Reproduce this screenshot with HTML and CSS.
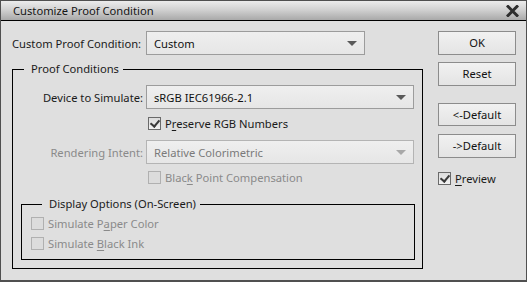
FILE: index.html
```html
<!DOCTYPE html>
<html>
<head>
<title>Customize Proof Condition</title>
<link rel="stylesheet" href="styles.css">
</head>
<body>

<div class="dialog">

	<!-- start:titlebar -->
	<div class="titlebar">
		<span class="title">Customize Proof Condition</span>
		<svg class="close" width="13" height="12" viewBox="0 0 13 12">
			<path d="M2 1.5 L11 10.5 M11 1.5 L2 10.5" stroke="#2e2e2e" stroke-width="3" stroke-linecap="square"/>
		</svg>
	</div>
	<!-- end:titlebar -->

	<div class="content">

		<!-- start:main -->
		<div class="main">

			<div class="top_row">
				<span class="top_label">Custom Proof Condition:</span>
				<div class="select top_select"><span>Custom</span><i class="arrow"></i></div>
			</div>

			<fieldset class="group proof">
				<legend>Proof Conditions</legend>

				<div class="field first">
					<span class="field_label">Device to Simulate:</span>
					<div class="select"><span>sRGB IEC61966-2.1</span><i class="arrow"></i></div>
				</div>

				<div class="check indent gap_a">
					<span class="box checked"></span>
					<span>P<u>r</u>eserve RGB Numbers</span>
				</div>

				<div class="field gap_b disabled">
					<span class="field_label">Rendering Intent:</span>
					<div class="select"><span>Relative Colorimetric</span><i class="arrow"></i></div>
				</div>

				<div class="check indent gap_c disabled">
					<span class="box"></span>
					<span>Blac<u>k</u> Point Compensation</span>
				</div>

				<fieldset class="group display">
					<legend>Display Options (On-Screen)</legend>
					<div class="check disabled gap_d">
						<span class="box"></span>
						<span>Simulate P<u>a</u>per Color</span>
					</div>
					<div class="check disabled gap_e">
						<span class="box"></span>
						<span>Simulate <u>B</u>lack Ink</span>
					</div>
				</fieldset>

			</fieldset>

		</div>
		<!-- end:main -->

		<!-- start:side -->
		<div class="side">
			<div class="button">OK</div>
			<div class="button reset">Reset</div>
			<div class="button back">&lt;-Default</div>
			<div class="button fwd">-&gt;Default</div>
			<div class="check preview">
				<span class="box checked"></span>
				<span><u>P</u>review</span>
			</div>
		</div>
		<!-- end:side -->

	</div>

</div>

</body>
</html>
```

FILE: styles.css
```css
html, body {margin: 0; padding: 0;}
body {background: #dfdfdf; font: 11.2px "Noto Sans", "Open Sans", Arial, sans-serif; color: #1a1a1a; white-space: nowrap;}
u {text-decoration: underline; text-underline-offset: 2px;}
/* ---------- ---------- WINDOW ---------- ---------- */
.dialog {width: 527px; height: 282px; box-sizing: border-box; border: 1px solid #505050; border-bottom-width: 2px; background: #dfdfdf; overflow: hidden;}
.titlebar {height: 19px; border-bottom: 1px solid #000; background: linear-gradient(#ececec, #d2d2d2 45%, #a9a9a9); display: flex; align-items: center; justify-content: space-between; padding: 0 7px 0 12px;}
.title {color: #151515; line-height: 19px;}
.close {display: block; margin-top: 1px;}
.content {display: flex; padding: 10px 0 0 11px;}
/* ---------- ---------- MAIN COLUMN ---------- ---------- */
.main {width: 411px;}
.top_row {display: flex; align-items: center; height: 24px;}
.top_label {width: 134px;}
.top_select {width: 219px;}
.select {box-sizing: border-box; height: 24px; border: 1px solid #9c9c9c; background: linear-gradient(#efefef, #e6e6e6); display: flex; align-items: center; justify-content: space-between; padding: 0 7px 0 7px; color: #111;}
.arrow {width: 0; height: 0; border-left: 5px solid transparent; border-right: 5px solid transparent; border-top: 5px solid #5a5a5a; margin-top: 1px;}
.group {border: 1px solid #000; margin: 0; min-width: 0;}
.group legend {padding: 0 4px 0 7px; margin-left: 11px; line-height: 16px;}
.proof {margin-top: 6px; height: 208px; box-sizing: border-box; padding: 0 7px 0 0;}
.field {display: grid; grid-template-columns: 130px 268px; column-gap: 3px; align-items: center;}
.field_label {text-align: right;}
.first {margin-top: 8px;}
.check {display: flex; align-items: center; height: 13px; gap: 4px;}
.indent {margin-left: 135px;}
.box {box-sizing: border-box; width: 13px; height: 13px; border: 1px solid #6a6a6a; background: linear-gradient(#dcdcdc, #f2f2f2); position: relative;}
.box.checked::after {content: ''; position: absolute; left: 3px; top: 0px; width: 4px; height: 7px; border-right: 2px solid #3a3a3a; border-bottom: 2px solid #3a3a3a; transform: rotate(40deg);}
.gap_a {margin-top: 8px;}
.gap_b {margin-top: 10px;}
.gap_c {margin-top: 7px;}
.disabled {color: #8a8a8a;}
.disabled .select {border-color: #b4b4b4; color: #7a7a7a;}
.disabled .arrow {border-top-color: #a8a8a8;}
.disabled .box {border-color: #b0b0b0; background: #dcdcdc;}
.display {margin: 12px 0 0 8px; height: 64px; box-sizing: border-box; padding: 0 0 0 9px;}
.gap_d {margin-top: 5px;}
.gap_e {margin-top: 7px;}
/* ---------- ---------- BUTTON COLUMN ---------- ---------- */
.side {width: 78px; margin-left: 15px;}
.button {box-sizing: border-box; height: 24px; border: 1px solid #8c8c8c; background: linear-gradient(#f1f1f1, #e4e4e4); text-align: center; line-height: 22px; color: #111;}
.reset {margin-top: 7px;}
.back {margin-top: 17px; height: 23px; line-height: 21px;}
.fwd {margin-top: 8px;}
.preview {margin-top: 14px;}
```
